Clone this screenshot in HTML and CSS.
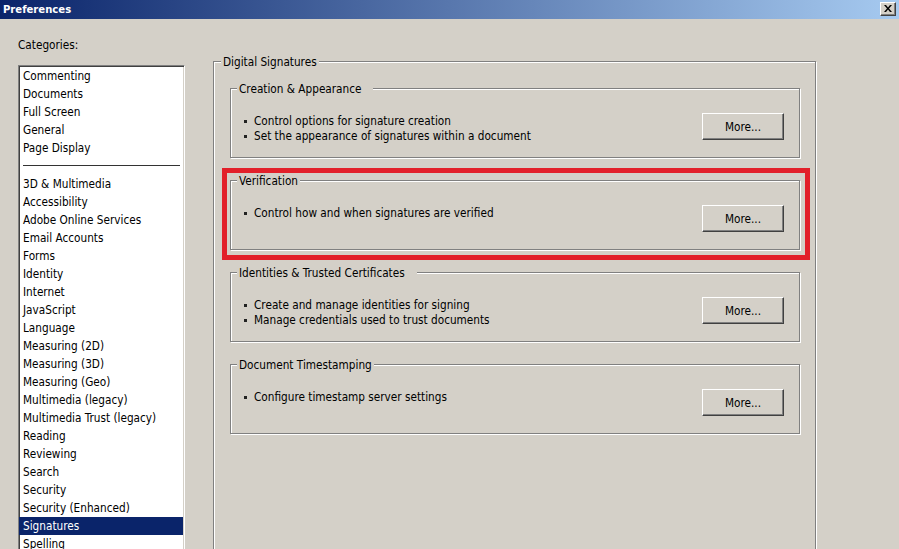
FILE: index.html
```html
<!DOCTYPE html>
<html>
<head>
<meta charset="utf-8">
<title>Preferences</title>
<link rel="stylesheet" href="styles.css">
</head>
<body>
<div class="window">
  <div class="titlebar">
    <span class="title">Preferences</span>
    <span class="close"><svg width="8" height="7" viewBox="0 0 8 7"><path d="M0 0h2l2 2.5L6 0h2L5 3.5L8 7H6L4 4.5L2 7H0l3-3.5z" fill="#000"/></svg></span>
  </div>
  <div class="content">
    <div class="left">
      <div class="label">Categories:</div>
      <div class="listbox">
        <div class="item">Commenting</div>
        <div class="item">Documents</div>
        <div class="item">Full Screen</div>
        <div class="item">General</div>
        <div class="item">Page Display</div>
        <div class="sep"></div>
        <div class="item">3D &amp; Multimedia</div>
        <div class="item">Accessibility</div>
        <div class="item">Adobe Online Services</div>
        <div class="item">Email Accounts</div>
        <div class="item">Forms</div>
        <div class="item">Identity</div>
        <div class="item">Internet</div>
        <div class="item">JavaScript</div>
        <div class="item">Language</div>
        <div class="item">Measuring (2D)</div>
        <div class="item">Measuring (3D)</div>
        <div class="item">Measuring (Geo)</div>
        <div class="item">Multimedia (legacy)</div>
        <div class="item">Multimedia Trust (legacy)</div>
        <div class="item">Reading</div>
        <div class="item">Reviewing</div>
        <div class="item">Search</div>
        <div class="item">Security</div>
        <div class="item">Security (Enhanced)</div>
        <div class="item selected">Signatures</div>
        <div class="item">Spelling</div>
      </div>
    </div>
    <div class="right">
      <div class="group outer">
        <span class="legend">Digital Signatures</span>
        <div class="group inner">
          <span class="legend wide">Creation &amp; Appearance</span>
          <div class="lines">
            <div class="line"><span class="bullet"></span>Control options for signature creation</div>
            <div class="line"><span class="bullet"></span>Set the appearance of signatures within a document</div>
          </div>
          <button class="btn">More...</button>
        </div>
        <div class="group inner">
          <span class="legend">Verification</span>
          <div class="lines">
            <div class="line"><span class="bullet"></span>Control how and when signatures are verified</div>
          </div>
          <button class="btn">More...</button>
          <div class="highlight"></div>
        </div>
        <div class="group inner">
          <span class="legend wide">Identities &amp; Trusted Certificates</span>
          <div class="lines">
            <div class="line"><span class="bullet"></span>Create and manage identities for signing</div>
            <div class="line"><span class="bullet"></span>Manage credentials used to trust documents</div>
          </div>
          <button class="btn">More...</button>
        </div>
        <div class="group inner">
          <span class="legend">Document Timestamping</span>
          <div class="lines">
            <div class="line"><span class="bullet"></span>Configure timestamp server settings</div>
          </div>
          <button class="btn">More...</button>
        </div>
      </div>
    </div>
  </div>
</div>
</body>
</html>
```

FILE: styles.css
```css
* { box-sizing: border-box; }
html, body {
  margin: 0;
  padding: 0;
  width: 899px;
  height: 549px;
  overflow: hidden;
  background: #d4d0c8;
}
body {
  font-family: "DejaVu Sans Condensed", "DejaVu Sans", sans-serif;
  font-stretch: condensed;
  font-size: 11.7px;
  color: #000;
}
.window { width: 899px; height: 549px; overflow: hidden; }
.titlebar {
  height: 19px;
  background: linear-gradient(to right, #0a246a, #a6caf0);
  display: flex;
  align-items: center;
  justify-content: space-between;
  padding: 0 3px 0 3px;
}
.title {
  color: #fff;
  font-weight: bold;
  font-size: 11.2px;
  line-height: 15px;
}
.close {
  width: 16px;
  height: 14px;
  background: #d4d0c8;
  border: 1px solid;
  border-color: #fff #404040 #404040 #fff;
  box-shadow: inset -1px -1px #808080;
  display: flex;
  align-items: center;
  justify-content: center;
  margin-top: -2px;
}
.content {
  display: flex;
  padding-left: 18px;
}
.left { width: 167px; }
.label {
  line-height: 15px;
  margin-top: 19px;
  height: 15px;
}
.listbox {
  margin-top: 12px;
  height: 520px;
  background: #fff;
  border: 1px solid;
  border-color: #808080 #fff #fff #808080;
  box-shadow: inset 1px 1px #404040, inset -1px -1px #d4d0c8;
  padding: 1px 2px 0 2px;
}
.item {
  height: 18px;
  line-height: 18px;
  padding-left: 2px;
  white-space: nowrap;
}
.item.selected {
  background: #0a246a;
  color: #fff;
  margin: 0 -1px 0 -2px;
  padding-left: 4px;
}
.sep {
  height: 18px;
  margin: 0 2px 0 2px;
  background: linear-gradient(#333, #333) no-repeat 0 8px / 100% 1px;
}
.right {
  margin-left: 28px;
  margin-top: 42px;
}
.group {
  position: relative;
  border: 1px solid #808080;
  box-shadow: inset 1px 1px #fff, 1px 1px #fff;
}
.outer {
  width: 603px;
  height: 600px;
  padding: 26px 0 0 16px;
}
.inner {
  width: 570px;
  height: 70px;
  margin-bottom: 22px;
  display: flex;
  justify-content: space-between;
  align-items: flex-start;
  padding: 25px 15px 0 13px;
}
.legend {
  position: absolute;
  top: -7px;
  left: 7px;
  padding: 0 2px;
  line-height: 15px;
  background: #d4d0c8;
  white-space: nowrap;
}
.inner .legend { left: 6px; }
.legend.wide { padding-right: 12px; }
.lines { line-height: 15px; }
.line { white-space: nowrap; display: flex; align-items: center; }
.bullet {
  display: inline-block;
  width: 3px;
  height: 3px;
  background: #222;
  margin-right: 7px;
}
.btn {
  width: 82px;
  height: 27px;
  font: inherit;
  color: #000;
  background: #d4d0c8;
  border: 1px solid;
  border-color: #fff #404040 #404040 #fff;
  box-shadow: inset -1px -1px #808080;
  padding: 0;
  margin-top: -1px;
}
.highlight {
  position: absolute;
  left: -9px;
  top: -13px;
  right: -11px;
  bottom: -11px;
  border: 5px solid #e2202a;
  pointer-events: none;
}
```
